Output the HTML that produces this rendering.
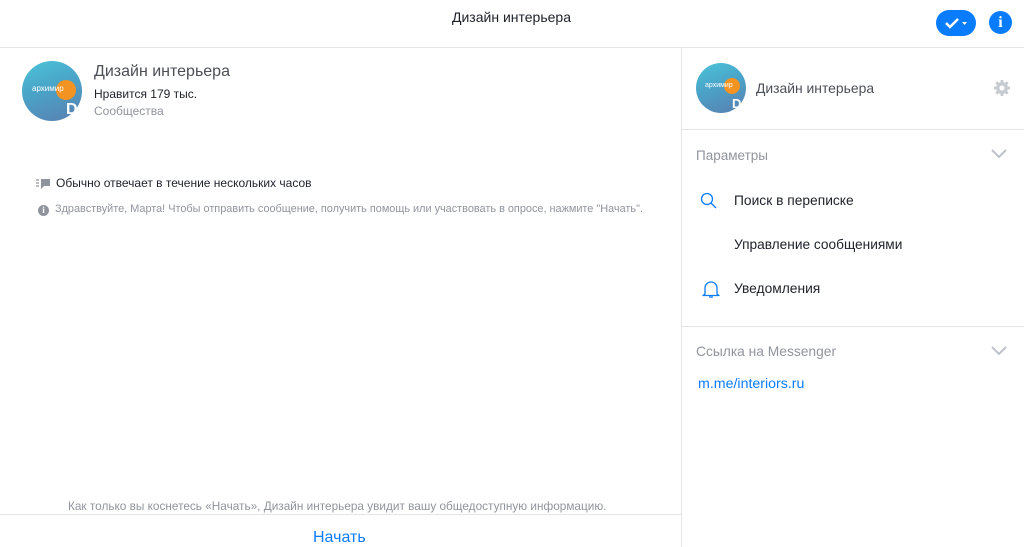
<!DOCTYPE html>
<html><head><meta charset="utf-8"><style>
*{margin:0;padding:0;box-sizing:border-box}
body{width:1024px;height:547px;overflow:hidden;background:#fff;font-family:"Liberation Sans",sans-serif;position:relative;color:#1d2129}
.a{position:absolute;white-space:nowrap}
.av{position:absolute;border-radius:50%;overflow:hidden;background:linear-gradient(160deg,#4cc4d8 0%,#4aa3c8 45%,#5a7fb0 100%)}
.av .o{position:absolute;border-radius:50%;background:#f39321}
.av .t{position:absolute;color:#fff;font-size:8px}
.av .d{position:absolute;color:#fff;font-weight:bold}
</style></head><body>
<div class="a" style="left:0;top:0;width:1024px;height:48px;border-bottom:1px solid #e5e5e5"></div>
<div class="a" style="left:452px;top:9px;font-size:14px;color:#1d2129">Дизайн интерьера</div>
<div class="a" style="left:936px;top:10px;width:40px;height:26px;border-radius:13px;background:#0a7cff">
<svg width="40" height="26" style="position:absolute;left:0;top:0"><path d="M10 13l4 4 8-8" stroke="#fff" stroke-width="2.5" fill="none"/><path d="M26 12h5l-2.5 3z" fill="#fff"/></svg></div>
<div class="a" style="left:989px;top:11px;width:23px;height:23px;border-radius:50%;background:#0a7cff;color:#fff;font:bold 16px 'Liberation Serif',serif;text-align:center;line-height:23px">i</div>
<div class="a" style="left:681px;top:48px;width:1px;height:499px;background:#e5e5e5"></div>

<div class="av" style="left:22px;top:61px;width:60px;height:60px"><div class="o" style="left:34px;top:19px;width:20px;height:20px"></div><div class="t" style="left:10px;top:23px">архимир</div><div class="d" style="left:44px;top:40px;font-size:16px">D</div></div>
<div class="a" style="left:94px;top:63px;font-size:16px;color:#4b4f56">Дизайн интерьера</div>
<div class="a" style="left:94px;top:87px;font-size:12px;color:#1d2129">Нравится 179 тыс.</div>
<div class="a" style="left:94px;top:104px;font-size:12px;color:#90949c">Сообщества</div>

<svg class="a" style="left:35px;top:178px" width="16" height="12"><path d="M1 2h3M1 5h3M1 8h3" stroke="#90949c" stroke-width="1.3"/><path d="M6 1h9v7h-6l-3 3z" fill="#90949c"/></svg>
<div class="a" style="left:56px;top:176px;font-size:12px;color:#1d2129">Обычно отвечает в течение нескольких часов</div>
<div class="a" style="left:38px;top:205px;width:11px;height:11px;border-radius:50%;background:#90949c;color:#fff;font:bold 9px 'Liberation Serif',serif;text-align:center;line-height:11px">i</div>
<div class="a" style="left:55px;top:203px;font-size:10.9px;color:#90949c">Здравствуйте, Марта! Чтобы отправить сообщение, получить помощь или участвовать в опросе, нажмите "Начать".</div>

<div class="a" style="left:68px;top:499px;font-size:11.8px;color:#90949c">Как только вы коснетесь «Начать», Дизайн интерьера увидит вашу общедоступную информацию.</div>
<div class="a" style="left:0;top:514px;width:681px;height:1px;background:#e5e5e5"></div>
<div class="a" style="left:313px;top:529px;font-size:16px;color:#0a7cff">Начать</div>

<div class="av" style="left:696px;top:63px;width:50px;height:50px"><div class="o" style="left:28px;top:15px;width:16px;height:16px"></div><div class="t" style="left:9px;top:19px;font-size:7px">архимир</div><div class="d" style="left:36px;top:33px;font-size:13px">D</div></div>
<div class="a" style="left:756px;top:80px;font-size:13.9px;color:#4b4f56">Дизайн интерьера</div>
<svg class="a" style="left:993px;top:79px" width="18" height="18" viewBox="0 0 18 18"><g fill="#c8ccd2"><circle cx="9" cy="9" r="6"/><rect x="7.5" y="1" width="3" height="16"/><rect x="1" y="7.5" width="16" height="3"/><rect x="7.5" y="1" width="3" height="16" transform="rotate(45 9 9)"/><rect x="7.5" y="1" width="3" height="16" transform="rotate(-45 9 9)"/></g><circle cx="9" cy="9" r="2.5" fill="#fff"/></svg>
<div class="a" style="left:682px;top:129px;width:342px;height:1px;background:#e5e5e5"></div>

<div class="a" style="left:696px;top:148px;font-size:13.5px;color:#90949c">Параметры</div>
<svg class="a" style="left:991px;top:149px" width="16" height="10"><path d="M1 1l7 7 7-7" stroke="#bec2c9" stroke-width="2" fill="none"/></svg>
<svg class="a" style="left:700px;top:192px" width="18" height="18"><circle cx="7" cy="7" r="5.5" stroke="#0a7cff" stroke-width="1.3" fill="none"/><path d="M11 11l5 5" stroke="#0a7cff" stroke-width="1.3"/></svg>
<div class="a" style="left:734px;top:193px;font-size:13.8px">Поиск в переписке</div>
<div class="a" style="left:734px;top:237px;font-size:13.7px">Управление сообщениями</div>
<svg class="a" style="left:702px;top:279px" width="18" height="20"><path d="M3 15V9a6 6 0 0 1 12 0v6l2 1.5H1z" stroke="#0a7cff" stroke-width="1.3" fill="none" stroke-linejoin="round"/><path d="M7 18h4" stroke="#0a7cff" stroke-width="1.3"/></svg>
<div class="a" style="left:734px;top:281px;font-size:13.8px">Уведомления</div>
<div class="a" style="left:682px;top:326px;width:342px;height:1px;background:#e5e5e5"></div>

<div class="a" style="left:696px;top:344px;font-size:13.8px;color:#90949c">Ссылка на Messenger</div>
<svg class="a" style="left:991px;top:346px" width="16" height="10"><path d="M1 1l7 7 7-7" stroke="#bec2c9" stroke-width="2" fill="none"/></svg>
<div class="a" style="left:698px;top:376px;font-size:14.2px;color:#0a7cff">m.me/interiors.ru</div>
</body></html>
